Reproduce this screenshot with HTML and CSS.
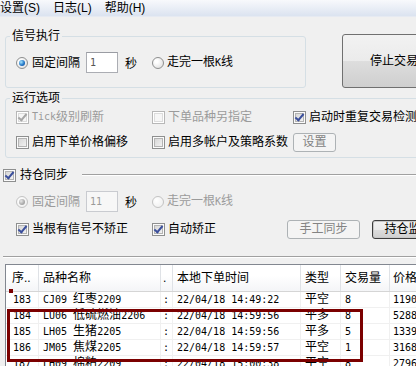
FILE: index.html
```html
<!DOCTYPE html>
<html lang="zh-CN">
<head>
  <meta charset="UTF-8">
  <title>交易信号</title>
  <link rel="stylesheet" href="styles.css">
</head>
<body>
  <div class="menubar">
    <span>设置(S)</span>
    <span>日志(L)</span>
    <span>帮助(H)</span>
  </div>

  <div class="main">
    <div class="top-row">
      <fieldset class="group group-signal">
        <legend>信号执行</legend>
        <div class="line">
          <span class="rb on"></span><span class="lbl">固定间隔</span>
          <span class="num-box"><span class="n">1</span></span>
          <span class="unit">秒</span>
          <span class="rb rb-second"></span><span class="lbl lbl-second">走完一根<span class="n">K</span>线</span>
        </div>
      </fieldset>
      <button class="btn btn-stop">停止交易</button>
    </div>

    <fieldset class="group group-run">
      <legend>运行选项</legend>
      <div class="opts">
        <div class="opt off row-a"><span class="cb on"></span><span class="n">Tick</span>级别刷新</div>
        <div class="opt off row-a"><span class="cb"></span>下单品种另指定</div>
        <div class="opt row-a"><span class="cb on"></span>启动时重复交易检测</div>
        <div class="opt row-b"><span class="cb"></span>启用下单价格偏移</div>
        <div class="opt row-b"><span class="cb"></span>启用多帐户及策略系数</div>
        <div class="opt row-b"><button class="btn btn-off btn-set">设置</button></div>
      </div>
    </fieldset>

    <div class="sync">
      <div class="sync-head">
        <span class="cb on"></span><span class="sync-title">持仓同步</span>
        <span class="rule"></span>
      </div>
      <div class="line sync-line off">
        <span class="rb off on"></span><span class="lbl">固定间隔</span>
        <span class="num-box num-off"><span class="n">11</span></span>
        <span class="unit unit-dark">秒</span>
        <span class="rb off rb-second"></span><span class="lbl lbl-second">走完一根<span class="n">K</span>线</span>
      </div>
      <div class="sync-opts">
        <div class="opt"><span class="cb on"></span>当根有信号不矫正</div>
        <div class="opt"><span class="cb on"></span>自动矫正</div>
        <div class="opt"><button class="btn btn-off btn-sync">手工同步</button></div>
        <div class="opt"><button class="btn btn-watch">持仓监控</button></div>
      </div>
    </div>

    <div class="list">
      <div class="head">
        <div class="c1">序..</div>
        <div class="c2">品种名称</div>
        <div class="c3">.</div>
        <div class="c4">本地下单时间</div>
        <div class="c5">类型</div>
        <div class="c6">交易量</div>
        <div class="c7">价格</div>
      </div>
      <div class="row">
        <div class="c1 n">183</div>
        <div class="c2"><span class="n">CJ09 </span>红枣<span class="n">2209</span></div>
        <div class="c3 n">:</div>
        <div class="c4 n">22/04/18 14:49:22</div>
        <div class="c5">平空</div>
        <div class="c6 n">8</div>
        <div class="c7 n">1190</div>
      </div>
      <div class="row">
        <div class="c1 n">184</div>
        <div class="c2"><span class="n">LU06 </span>低硫燃油<span class="n">2206</span></div>
        <div class="c3 n">:</div>
        <div class="c4 n">22/04/18 14:59:56</div>
        <div class="c5">平多</div>
        <div class="c6 n">8</div>
        <div class="c7 n">5288</div>
      </div>
      <div class="row">
        <div class="c1 n">185</div>
        <div class="c2"><span class="n">LH05 </span>生猪<span class="n">2205</span></div>
        <div class="c3 n">:</div>
        <div class="c4 n">22/04/18 14:59:56</div>
        <div class="c5">平多</div>
        <div class="c6 n">5</div>
        <div class="c7 n">1339</div>
      </div>
      <div class="row">
        <div class="c1 n">186</div>
        <div class="c2"><span class="n">JM05 </span>焦煤<span class="n">2205</span></div>
        <div class="c3 n">:</div>
        <div class="c4 n">22/04/18 14:59:57</div>
        <div class="c5">平空</div>
        <div class="c6 n">1</div>
        <div class="c7 n">3168</div>
      </div>
      <div class="row">
        <div class="c1 n">187</div>
        <div class="c2"><span class="n">LH09 </span>棉粕<span class="n">2209</span></div>
        <div class="c3 n">:</div>
        <div class="c4 n">22/04/18 15:00:38</div>
        <div class="c5">平空</div>
        <div class="c6 n">8</div>
        <div class="c7 n">2796</div>
      </div>

      <!-- selection markers drawn over the rows -->
      <div class="focus-dot"></div>
      <div class="mark"></div>
    </div>
  </div>
</body>
</html>
```

FILE: styles.css
```css
body {
  margin: 0;
  width: 416px;
  height: 366px;
  overflow: hidden;
  background-color: #f0f0f0;
  font-family: "Liberation Sans", "Noto Sans CJK SC", sans-serif;
  font-size: 12px;
  color: #000;
}

.n {
  font-family: "DejaVu Sans Mono", "Noto Sans CJK SC", monospace;
  font-size: 10px;
}

/* menu */
.menubar {
  height: 16px;
  display: flex;
  align-items: center;
  line-height: 14px;
  background: linear-gradient(#f8f9fc, #dbe3f0);
  border-bottom: 1px solid #e6eaf2;
}

.menubar span {
  margin-right: 13px;
}

.main {
  padding-left: 5px;
}

/* group boxes */
.group {
  margin: 0;
  padding: 0;
  min-width: 0;
  box-sizing: border-box;
  border: 1px solid #d5dfe5;
  border-radius: 3px;
}

.group legend {
  margin-left: 4px;
  padding: 0 2px;
  line-height: 14px;
}

.top-row {
  display: flex;
  align-items: flex-start;
  margin-top: 12px;
}

.group-signal {
  flex: none;
  width: 301px;
}

.group-signal .line {
  padding: 9px 0 14px 10px;
}

.line {
  display: flex;
  align-items: center;
  height: 21px;
  white-space: nowrap;
}

.lbl {
  margin-left: 4px;
  line-height: 14px;
}

.lbl-second {
  margin-left: 3px;
}

.num-box {
  margin-left: 6px;
  width: 32px;
  height: 21px;
  box-sizing: border-box;
  border: 1px solid #abadb3;
  border-top-color: #9a9ca3;
  background: #fff;
  padding-left: 3px;
  display: flex;
  align-items: center;
  color: #555;
}

.num-off {
  border-color: #c9cbd0;
  background: #f7f7f7;
  color: #9a9a9a;
}

.unit {
  margin-left: 7px;
}

.unit-dark {
  color: #000;
}

.rb {
  flex: none;
  position: relative;
  width: 12px;
  height: 12px;
  box-sizing: border-box;
  border-radius: 50%;
  border: 1px solid #8e8f8f;
  background: radial-gradient(circle at 35% 35%, #fff 15%, #d9d9d9 100%);
}

.rb-second {
  margin-left: 15px;
}

.rb.on::after {
  content: "";
  position: absolute;
  left: 2px;
  top: 2px;
  width: 6px;
  height: 6px;
  border-radius: 50%;
  background: radial-gradient(circle at 35% 35%, #a8e6ff, #2378c8 55%, #0c3e8a);
}

.rb.off {
  border-color: #c3c3c3;
  background: radial-gradient(circle at 35% 35%, #fff, #ececec);
}

.rb.off.on::after {
  background: radial-gradient(circle at 35% 35%, #e8e8e8, #a9a9a9 60%, #9a9a9a);
}

/* checkboxes */
.cb {
  flex: none;
  position: relative;
  width: 13px;
  height: 13px;
  box-sizing: border-box;
  margin-right: 3px;
  border: 1px solid #8e8f8f;
  background: linear-gradient(135deg, #d0d0d0, #f9f9f9);
  box-shadow: inset 0 0 0 1px #fbfbfb, inset 0 0 0 2px #b4b4b4;
}

.cb.on::after {
  content: "";
  position: absolute;
  left: 3px;
  top: 0;
  width: 3px;
  height: 7px;
  border: solid #3b4f9c;
  border-width: 0 2px 2px 0;
  transform: rotate(40deg);
}

.off .cb {
  border-color: #b7b7b7;
  background: #f6f6f6;
  box-shadow: inset 0 0 0 1px #fff, inset 0 0 0 2px #dcdcdc;
}

.off .cb.on::after {
  border-color: #a6a6a6;
}

.off {
  color: #9b9b9b;
}

.off .unit-dark {
  color: #000;
}

/* buttons */
.btn {
  font-family: inherit;
  font-size: 12px;
  padding: 0;
  border: 1px solid #707070;
  border-radius: 3px;
  background: linear-gradient(#f2f2f2 0%, #ebebeb 50%, #dddddd 51%, #cfcfcf 100%);
  color: #000;
  line-height: 14px;
}

.btn-stop {
  flex: none;
  margin-top: 5px;
  margin-left: 36px;
  width: 104px;
  height: 54px;
}

.btn-off {
  border-color: #adb2b5;
  background: #f4f4f4;
  color: #838383;
}

.btn-set {
  width: 43px;
  height: 19px;
}

.btn-sync {
  width: 73px;
  height: 19px;
}

.btn-watch {
  width: 73px;
  height: 19px;
  border-color: #3c3c3c;
  box-shadow: inset 0 0 0 1px #c8c8c8;
}

/* run options */
.group-run {
  margin-top: 3px;
  width: 440px;
}

.opts {
  display: grid;
  grid-template-columns: 136px 141px auto;
  row-gap: 7px;
  padding: 4px 0 5px 10px;
}

.opt {
  display: flex;
  align-items: center;
  white-space: nowrap;
  line-height: 14px;
}

.row-a {
  height: 16px;
}

.row-b {
  height: 20px;
}

/* position sync */
.sync {
  margin-left: -2px;
  width: 440px;
  border-bottom: 1px solid #a0a0a0;
  box-shadow: 0 1px 0 #fff;
  padding-bottom: 17px;
}

.sync-head {
  display: flex;
  align-items: center;
  height: 14px;
  margin-top: 10px;
  line-height: 14px;
}

.sync-head .cb {
  margin-right: 4px;
}

.rule {
  flex: 1;
  margin-left: 14px;
  border-top: 1px solid #a0a0a0;
  border-bottom: 1px solid #fff;
}

.sync-line {
  margin-top: 9px;
  padding-left: 13px;
}

.sync-opts {
  display: grid;
  grid-template-columns: 136px 135px 85px auto;
  height: 20px;
  margin-top: 7px;
  padding-left: 13px;
}

/* order list */
.list {
  position: relative;
  margin-top: 7px;
  width: 430px;
  height: 120px;
  border-top: 1px solid #828790;
  border-left: 1px solid #828790;
  background: #fff;
}

.head,
.row {
  display: grid;
  grid-template-columns: 33px 122px 12px 128px 40px 49px 70px;
  white-space: nowrap;
}

.head {
  height: 27px;
  box-sizing: border-box;
  border-bottom: 1px solid #d5d5d5;
  background: linear-gradient(#fff 40%, #f4f5f7);
  line-height: 26px;
}

.head div {
  border-right: 1px solid #dfe2e6;
  overflow: hidden;
}

.row {
  height: 16px;
  box-sizing: border-box;
  border-bottom: 1px solid #f0f0f0;
  line-height: 15px;
}

.row div {
  border-right: 1px solid #f0f0f0;
  overflow: hidden;
}

.c1 { padding-left: 6px; }
.row .c1 { padding-left: 7px; }
.c2 { padding-left: 4px; }
.c3 { padding-left: 2px; }
.c4 { padding-left: 4px; }
.c5 { padding-left: 4px; }
.c6 { padding-left: 4px; }
.c7 { padding-left: 3px; }

.focus-dot {
  position: absolute;
  left: 3px;
  top: 24px;
  width: 4px;
  height: 4px;
  background: #7b0000;
}

.mark {
  position: absolute;
  left: 1px;
  top: 44px;
  width: 356px;
  height: 53px;
  box-sizing: border-box;
  border: 3px solid #7b0000;
}
```
